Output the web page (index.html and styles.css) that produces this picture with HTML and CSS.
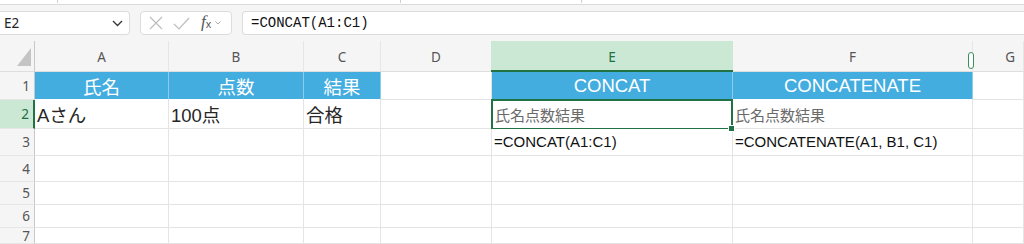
FILE: index.html
```html
<!DOCTYPE html>
<html lang="ja">
<head>
    <meta charset="UTF-8">
    <meta name="viewport" content="width=device-width, initial-scale=1.0">
    <title>CONCAT と CONCATENATE</title>
    <link rel="stylesheet" href="styles.css">
</head>
<body>

    <div id="ribbonEdge">
        <span class="tick" style="left: 57px;"></span>
        <span class="tick" style="left: 400px;"></span>
        <span class="tick" style="left: 581px;"></span>
    </div>

    <div id="formulaBar">
        <div id="nameBox">
            <span>E2</span>
            <svg class="chevron" width="11" height="7" viewBox="0 0 11 7"><path d="M1 1 L5.5 5.5 L10 1" fill="none" stroke="#333" stroke-width="1.3"/></svg>
        </div>
        <div id="fnBox">
            <svg width="14" height="14" viewBox="0 0 14 14"><path d="M1 1 L13 13 M13 1 L1 13" stroke="#bdbdbd" stroke-width="1.2"/></svg>
            <svg width="17" height="13" viewBox="0 0 17 13"><path d="M1 7 L6 12 L16 1" fill="none" stroke="#bdbdbd" stroke-width="1.2"/></svg>
            <span class="fx"><i>f</i><sub>x</sub></span>
            <svg width="6" height="4" viewBox="0 0 6 4"><path d="M0.5 0.5 L3 3 L5.5 0.5" fill="none" stroke="#aaa" stroke-width="1"/></svg>
        </div>
        <div id="formulaInput">=CONCAT(A1:C1)</div>
    </div>

    <div id="sheet">
        <!-- column headers -->
        <div class="corner">
            <svg width="14" height="18" viewBox="0 0 14 18"><path d="M14 0 L14 18 L0 18 Z" fill="#c4c4c4"/></svg>
        </div>
        <div class="colHead">A</div>
        <div class="colHead">B</div>
        <div class="colHead">C</div>
        <div class="colHead">D</div>
        <div class="colHead active">E</div>
        <div class="colHead">F</div>
        <div class="colHead g">G<span class="resizer"></span></div>

        <!-- row 1 -->
        <div class="rowHead">1</div>
        <div class="cell head">氏名</div>
        <div class="cell head">点数</div>
        <div class="cell head">結果</div>
        <div class="cell"></div>
        <div class="cell head">CONCAT</div>
        <div class="cell head">CONCATENATE</div>
        <div class="cell"></div>

        <!-- row 2 -->
        <div class="rowHead active">2</div>
        <div class="cell big">Aさん</div>
        <div class="cell big">100点</div>
        <div class="cell big">合格</div>
        <div class="cell"></div>
        <div class="cell result selected">氏名点数結果<span class="handle"></span></div>
        <div class="cell result">氏名点数結果</div>
        <div class="cell"></div>

        <!-- row 3 -->
        <div class="rowHead">3</div>
        <div class="cell"></div>
        <div class="cell"></div>
        <div class="cell"></div>
        <div class="cell"></div>
        <div class="cell formula">=CONCAT(A1:C1)</div>
        <div class="cell formula">=CONCATENATE(A1, B1, C1)</div>
        <div class="cell"></div>

        <div class="rowHead">4</div>
        <div class="cell"></div><div class="cell"></div><div class="cell"></div><div class="cell"></div><div class="cell"></div><div class="cell"></div><div class="cell"></div>
        <div class="rowHead">5</div>
        <div class="cell"></div><div class="cell"></div><div class="cell"></div><div class="cell"></div><div class="cell"></div><div class="cell"></div><div class="cell"></div>
        <div class="rowHead">6</div>
        <div class="cell"></div><div class="cell"></div><div class="cell"></div><div class="cell"></div><div class="cell"></div><div class="cell"></div><div class="cell"></div>
        <div class="rowHead">7</div>
        <div class="cell"></div><div class="cell"></div><div class="cell"></div><div class="cell"></div><div class="cell"></div><div class="cell"></div><div class="cell"></div>
    </div>

</body>
</html>
```

FILE: styles.css
```css
body {
    margin: 0;
    padding: 0;
    background-color: #f5f5f5;
    font-family: "Liberation Sans", "Noto Sans CJK JP", sans-serif;
    overflow: hidden;
    height: 244px;
}

#ribbonEdge {
    height: 4px;
    background-color: #fff;
    border-bottom: 1px solid #dadada;
    position: relative;
}
.tick {
    position: absolute;
    top: 0;
    width: 1px;
    height: 3px;
    background-color: #cfcfcf;
}

#formulaBar {
    display: flex;
    align-items: center;
    height: 36px;
    box-sizing: border-box;
}

#nameBox {
    width: 130px;
    height: 24px;
    box-sizing: border-box;
    background-color: #fff;
    border: 1px solid #dcdcdc;
    border-left: none;
    border-radius: 0 4px 4px 0;
    display: flex;
    align-items: center;
    justify-content: space-between;
    padding: 0 4px 0 4px;
    font-family: "Noto Sans", sans-serif;
    font-size: 13.5px;
    color: #222;
}
#nameBox .chevron {
    margin-right: 2px;
}

#fnBox {
    margin-left: 10px;
    width: 92px;
    height: 24px;
    box-sizing: border-box;
    background-color: #fff;
    border: 1px solid #dcdcdc;
    border-radius: 4px;
    display: flex;
    align-items: center;
    padding: 0 4px 0 8px;
    gap: 10px;
}
#fnBox .fx {
    font-family: "Liberation Serif", serif;
    font-size: 17px;
    line-height: 18px;
    color: #555;
    margin-left: 1px;
    margin-right: -6px;
}
#fnBox .fx sub {
    font-family: "Liberation Sans", sans-serif;
    font-style: normal;
    font-size: 11px;
    vertical-align: -1px;
}

#formulaInput {
    margin-left: 10px;
    flex: 1;
    height: 24px;
    box-sizing: border-box;
    background-color: #fff;
    border: 1px solid #dcdcdc;
    border-right: none;
    border-radius: 4px 0 0 4px;
    padding-left: 8px;
    font-family: "Liberation Mono", monospace;
    font-size: 14px;
    line-height: 22px;
    color: #111;
}

#sheet {
    display: grid;
    grid-template-columns: 35px 134px 135px 77px 111px 241px 240px 1fr;
    grid-template-rows: 31px 28px 29px 27px 26px 23px 23px 16px;
}

.corner {
    border-right: 1px solid #c9c9c9;
    border-bottom: 1px solid #dedede;
    display: flex;
    align-items: flex-end;
    justify-content: flex-end;
    padding: 0 3px 5px 0;
    box-sizing: border-box;
}

.colHead {
    display: flex;
    align-items: center;
    justify-content: center;
    font-family: "Noto Sans", sans-serif;
    font-size: 13.5px;
    color: #555;
    border-right: 1px solid #e6e6e6;
    border-bottom: 1px solid #dedede;
    box-sizing: border-box;
    padding-top: 2px;
}
.colHead.active {
    background-color: #cbe8d4;
    color: #1e6f43;
    border-bottom: 2px solid #217346;
    border-right: none;
    margin-left: -1px;
}
.colHead.g {
    position: relative;
    justify-content: flex-end;
    padding-right: 8px;
}
.resizer {
    position: absolute;
    left: -5px;
    top: 11px;
    width: 4px;
    height: 15px;
    border: 1px solid #3c8f5d;
    border-radius: 3px;
    background-color: #fff;
}

.rowHead {
    display: flex;
    align-items: center;
    justify-content: flex-end;
    padding-right: 4px;
    font-family: "Noto Sans", sans-serif;
    font-size: 13.5px;
    color: #555;
    border-right: 1px solid #c9c9c9;
    border-bottom: 1px solid #e6e6e6;
    box-sizing: border-box;
}
.rowHead.active {
    background-color: #cbe8d4;
    color: #1e6f43;
    border-right: 2px solid #217346;
}

.cell {
    background-color: #fff;
    border-right: 1px solid #e4e4e4;
    border-bottom: 1px solid #e4e4e4;
    box-sizing: border-box;
    display: flex;
    align-items: center;
    padding-left: 2px;
    white-space: nowrap;
    color: #222;
    position: relative;
}
.cell.head {
    background-color: #44ade0;
    border-right-color: #8fcbe9;
    border-bottom-color: #fff;
    color: #fff;
    justify-content: center;
    font-size: 18.5px;
    padding-left: 0;
}
.cell.big {
    font-size: 18.5px;
    color: #262626;
}
.cell.result {
    font-size: 15px;
    color: #6a6a6a;
}
.cell.selected {
    border: 2px solid #217346;
    margin: -1px 0 -1px -1px;
    padding-left: 2px;
}
.handle {
    position: absolute;
    right: -4px;
    bottom: -4px;
    width: 5px;
    height: 5px;
    background-color: #217346;
    border: 1px solid #fff;
    z-index: 2;
}
.cell.formula {
    font-size: 15px;
    color: #111;
    padding-bottom: 2px;
}
```
